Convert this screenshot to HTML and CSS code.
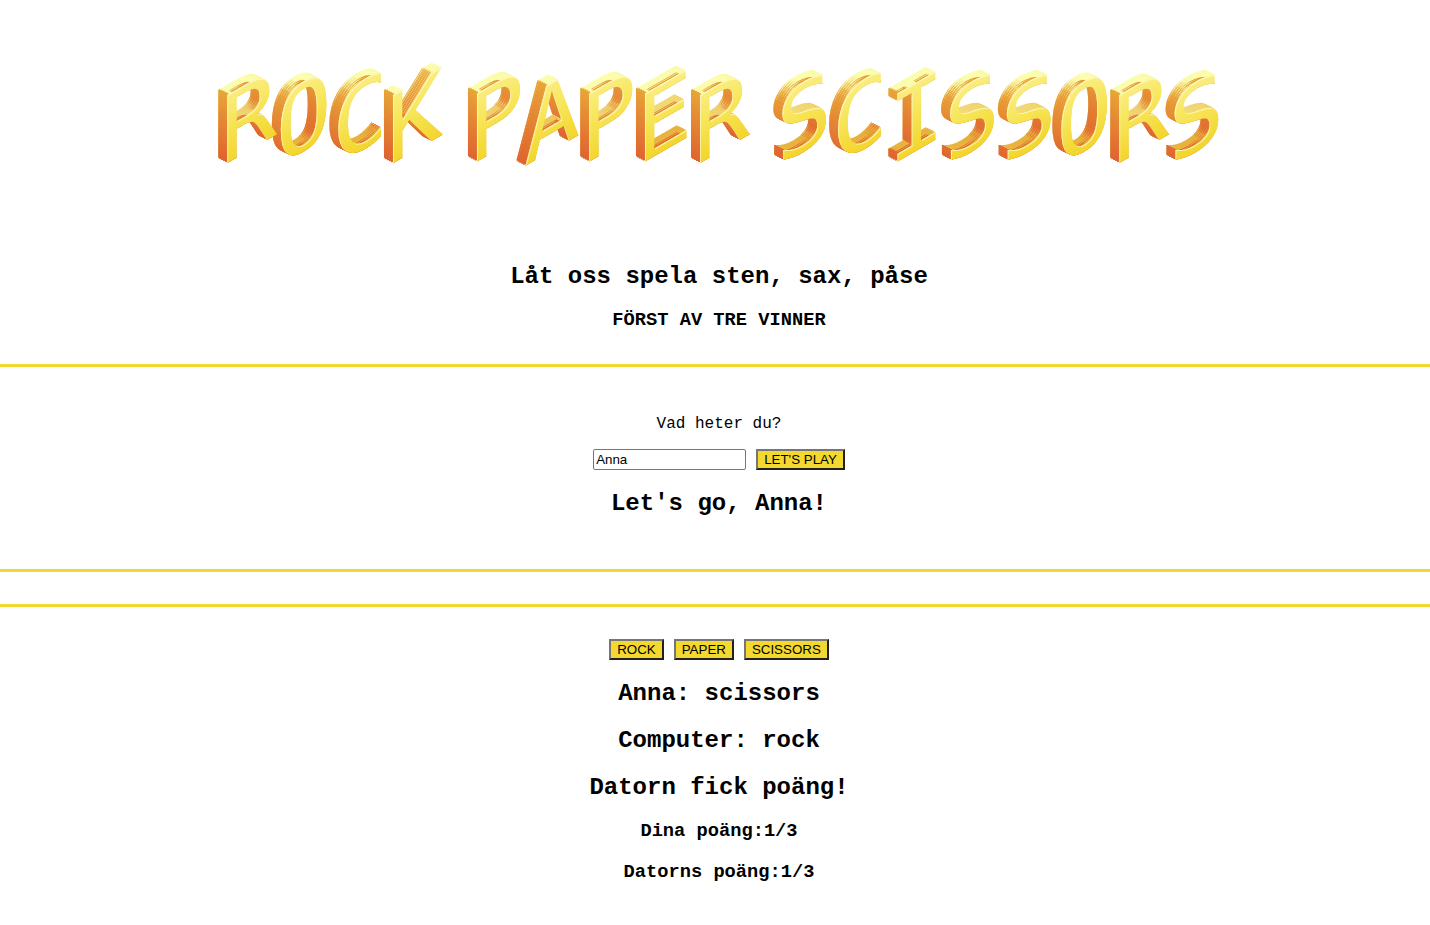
FILE: index.html
```html
<!DOCTYPE html>
<html lang="sv">
<head>
<meta charset="utf-8">
<meta name="viewport" content="width=device-width, initial-scale=1">
<title>Rock Paper Scissors</title>
<link rel="stylesheet" href="styles.css">
</head>
<body>
<header class="intro">
  <h1 class="logo">
    <svg class="logo-art" viewBox="0 0 1002 100" role="img" aria-label="Rock Paper Scissors">
      <defs>
        <linearGradient id="face" gradientUnits="userSpaceOnUse" x1="0" y1="-74" x2="0" y2="0">
          <stop offset="0" stop-color="#faee86"/>
          <stop offset="0.45" stop-color="#f7e65a"/>
          <stop offset="1" stop-color="#f3d52c"/>
        </linearGradient>
        <!-- Sweeps the lettering up and to the left: pale tops, orange sides -->
        <filter id="extrude" filterUnits="userSpaceOnUse" x="-20" y="-20" width="1042" height="140" color-interpolation-filters="sRGB">
          <feColorMatrix in="SourceGraphic" result="top0" type="matrix" values="0 0 0.25 0 0.86  0 0 1 0 0.5  0 0 1.5 0 -0.06  0 0 0 1 0"/>
          <feOffset in="top0" dx="-1" dy="-1" result="a"/>
          <feMerge result="top1"><feMergeNode in="a"/><feMergeNode in="top0"/></feMerge>
          <feOffset in="top1" dx="-2" dy="-1" result="b"/>
          <feMerge result="top2"><feMergeNode in="b"/><feMergeNode in="top1"/></feMerge>
          <feOffset in="top2" dx="-4" dy="-2" result="c"/>
          <feMerge result="top3"><feMergeNode in="c"/><feMergeNode in="top2"/></feMerge>
          <feOffset in="top3" dx="-2" dy="-1" result="d"/>
          <feMerge result="tops"><feMergeNode in="d"/><feMergeNode in="top3"/></feMerge>
          <feColorMatrix in="SourceGraphic" result="sideFill" type="matrix" values="0 0 0.1 0 0.86  0 0 0.8 0 0.25  0 0 0.1 0 0.17  0 0 0 1 0"/>
          <feOffset in="SourceAlpha" dx="2" dy="-2" result="shift"/>
          <feComposite in="sideFill" in2="shift" operator="out" result="side0"/>
          <feOffset in="side0" dx="-1" dy="-1" result="e"/>
          <feMerge result="side1"><feMergeNode in="e"/><feMergeNode in="side0"/></feMerge>
          <feOffset in="side1" dx="-2" dy="-1" result="f"/>
          <feMerge result="side2"><feMergeNode in="f"/><feMergeNode in="side1"/></feMerge>
          <feOffset in="side2" dx="-4" dy="-2" result="g"/>
          <feMerge result="side3"><feMergeNode in="g"/><feMergeNode in="side2"/></feMerge>
          <feOffset in="side3" dx="-2" dy="-1" result="h"/>
          <feMerge result="sides"><feMergeNode in="h"/><feMergeNode in="side3"/></feMerge>
          <feOffset in="SourceAlpha" dx="1" dy="1" result="inner"/>
          <feFlood flood-color="#fffbd0" flood-opacity="0.7"/>
          <feComposite in2="SourceAlpha" operator="in"/>
          <feComposite in2="inner" operator="out" result="rim"/>
          <feMerge>
            <feMergeNode in="tops"/><feMergeNode in="sides"/><feMergeNode in="SourceGraphic"/><feMergeNode in="rim"/>
          </feMerge>
        </filter>
      </defs>
      <g class="letters" filter="url(#extrude)">
        <text transform="translate(28 87) skewY(-30)">R</text>
        <text transform="translate(83 87) skewY(-30)">O</text>
        <text transform="translate(140 87) skewY(-30)">C</text>
        <text transform="translate(195 87) skewY(-30)">K</text>
        <text transform="translate(277 87) skewY(-30)">P</text>
        <text transform="translate(333 87) skewY(-30)">A</text>
        <text transform="translate(390 87) skewY(-30)">P</text>
        <text transform="translate(446 87) skewY(-30)">E</text>
        <text transform="translate(504 87) skewY(-30)">R</text>
        <text transform="translate(587 87) skewY(-30)">S</text>
        <text transform="translate(643 87) skewY(-30)">C</text>
        <text transform="translate(700 87) skewY(-30)">I</text>
        <text transform="translate(756 87) skewY(-30)">S</text>
        <text transform="translate(813 87) skewY(-30)">S</text>
        <text transform="translate(869 87) skewY(-30)">O</text>
        <text transform="translate(926 87) skewY(-30)">R</text>
        <text transform="translate(982 87) skewY(-30)">S</text>
      </g>
    </svg>
  </h1>
  <h2>Låt oss spela sten, sax, påse</h2>
  <h3>FÖRST AV TRE VINNER</h3>
</header>
<main>
  <section class="panel">
    <p><label for="name">Vad heter du?</label></p>
    <form class="controls" onsubmit="return false">
      <input class="name" id="name" type="text" value="Anna">
      <button class="btn" type="submit">LET'S PLAY</button>
    </form>
    <h2>Let's go, Anna!</h2>
  </section>
  <section class="panel panel-game">
    <div class="controls">
      <button class="btn" type="button">ROCK</button>
      <button class="btn" type="button">PAPER</button>
      <button class="btn" type="button">SCISSORS</button>
    </div>
    <h2>Anna: scissors</h2>
    <h2>Computer: rock</h2>
    <h2>Datorn fick poäng!</h2>
    <h3>Dina poäng:1/3</h3>
    <h3>Datorns poäng:1/3</h3>
  </section>
</main>
</body>
</html>
```
FILE: styles.css
```css
body {
  margin: 0;
  background: #fff;
  color: #000;
  font-family: "Courier New", "Liberation Mono", monospace;
  text-align: center;
}
h2 {
  margin: 20px 0;
  font-size: 24px;
  line-height: 27px;
}
h3 {
  margin: 20px 0;
  line-height: 21px;
}
p {
  margin: 16px 0;
  font-size: 16px;
  line-height: 18px;
}
.intro {
  display: flow-root;
  padding: 64px 0 13px 8px;
}
.logo {
  margin: 0 0 100px;
  font-size: 32px;
  line-height: 0;
}
.logo-art {
  width: 70%;
  height: auto;
  overflow: visible;
}
.letters {
  fill: url(#face);
  font-family: "DejaVu Sans Mono", monospace;
  font-size: 94px;
  font-weight: 400;
  text-anchor: middle;
}
.panel {
  display: flow-root;
  padding: 32px 0 32px 8px;
  border-top: 3px solid #f3d92f;
  border-bottom: 3px solid #f3d92f;
}
.panel-game {
  margin-top: 32px;
  border-bottom: 0;
}
.controls {
  display: flex;
  justify-content: center;
  gap: 10px;
}
.name,
.btn {
  box-sizing: border-box;
  height: 21px;
  font-family: Arial, "Liberation Sans", sans-serif;
}
.name {
  width: 153px;
  padding: 1px 2px;
  border: 1px solid #767676;
  border-radius: 2px;
  background: #fff;
  color: #000;
}
.btn {
  padding: 0 6px;
  border: 2px solid;
  border-color: #767676 #212121 #212121 #767676;
  border-radius: 0;
  background: #f3d92f;
  color: #000;
}
```
